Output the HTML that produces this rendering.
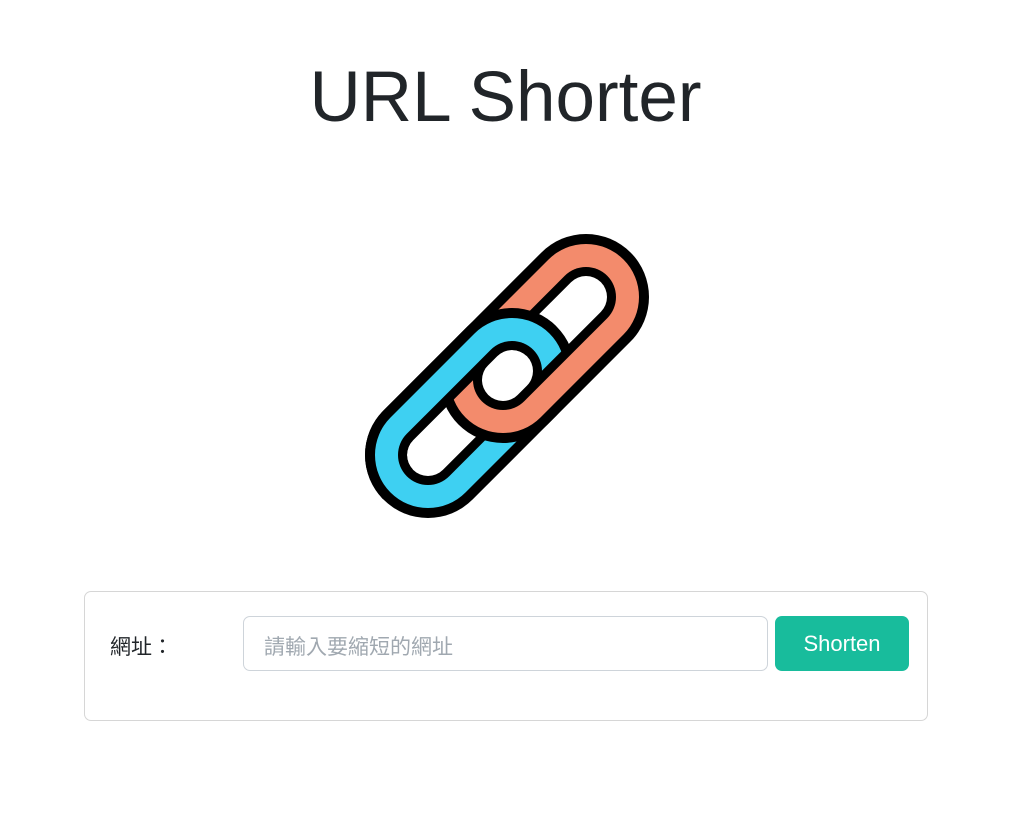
<!DOCTYPE html>
<html><head><meta charset="utf-8"><style>
body{margin:0;background:#fff;width:1011px;height:826px;overflow:hidden;font-family:"Liberation Sans","Noto Sans CJK TC",sans-serif;}
h1{position:absolute;top:53px;left:0;width:1011px;text-align:center;margin:0;font-weight:normal;font-size:71px;color:#212529;line-height:90px;}
.card{position:absolute;left:84px;top:591px;width:842px;height:128px;border:1px solid #d6d6d6;border-radius:7px;}
.lab{position:absolute;left:110px;top:631px;font-size:21px;color:#212529;}
.inp{position:absolute;left:243px;top:616px;width:525px;height:55px;border:1px solid #ced4da;border-radius:7px;box-sizing:border-box;font-size:21px;color:#a0a8b0;padding:14px 0 0 20px;}
.btn{position:absolute;left:775px;top:616px;width:134px;height:55px;background:#18bc9c;border-radius:7px;color:#fff;font-size:22px;text-align:center;line-height:56px;}
</style></head><body>
<h1>URL Shorter</h1>
<svg width="1011" height="826" style="position:absolute;left:0;top:0">
<defs>
<mask id="mo" maskUnits="userSpaceOnUse" x="0" y="0" width="1011" height="826"><rect width="1011" height="826" fill="#fff"/><line x1="586" y1="297" x2="503" y2="380" stroke="#000" stroke-width="42" stroke-linecap="round"/></mask>
<mask id="mb" maskUnits="userSpaceOnUse" x="0" y="0" width="1011" height="826"><rect width="1011" height="826" fill="#fff"/><line x1="428" y1="455" x2="512" y2="371" stroke="#000" stroke-width="42" stroke-linecap="round"/></mask>
<clipPath id="cp"><polygon points="0,0 882,0 0,882"/></clipPath>
<g id="blue" mask="url(#mb)"><g stroke-linecap="round"><line x1="428" y1="455" x2="512" y2="371" stroke="#000" stroke-width="126"/><line x1="428" y1="455" x2="512" y2="371" stroke="#3ed0f2" stroke-width="106"/><line x1="428" y1="455" x2="512" y2="371" stroke="#000" stroke-width="60"/></g></g>
</defs>
<use href="#blue"/>
<g mask="url(#mo)" stroke-linecap="round"><line x1="586" y1="297" x2="503" y2="380" stroke="#000" stroke-width="126"/><line x1="586" y1="297" x2="503" y2="380" stroke="#f38b6c" stroke-width="106"/><line x1="586" y1="297" x2="503" y2="380" stroke="#000" stroke-width="60"/></g>
<g clip-path="url(#cp)"><use href="#blue"/></g>
</svg>
<div class="card"></div>
<div class="lab">網址：</div>
<div class="inp">請輸入要縮短的網址</div>
<div class="btn">Shorten</div>
</body></html>
